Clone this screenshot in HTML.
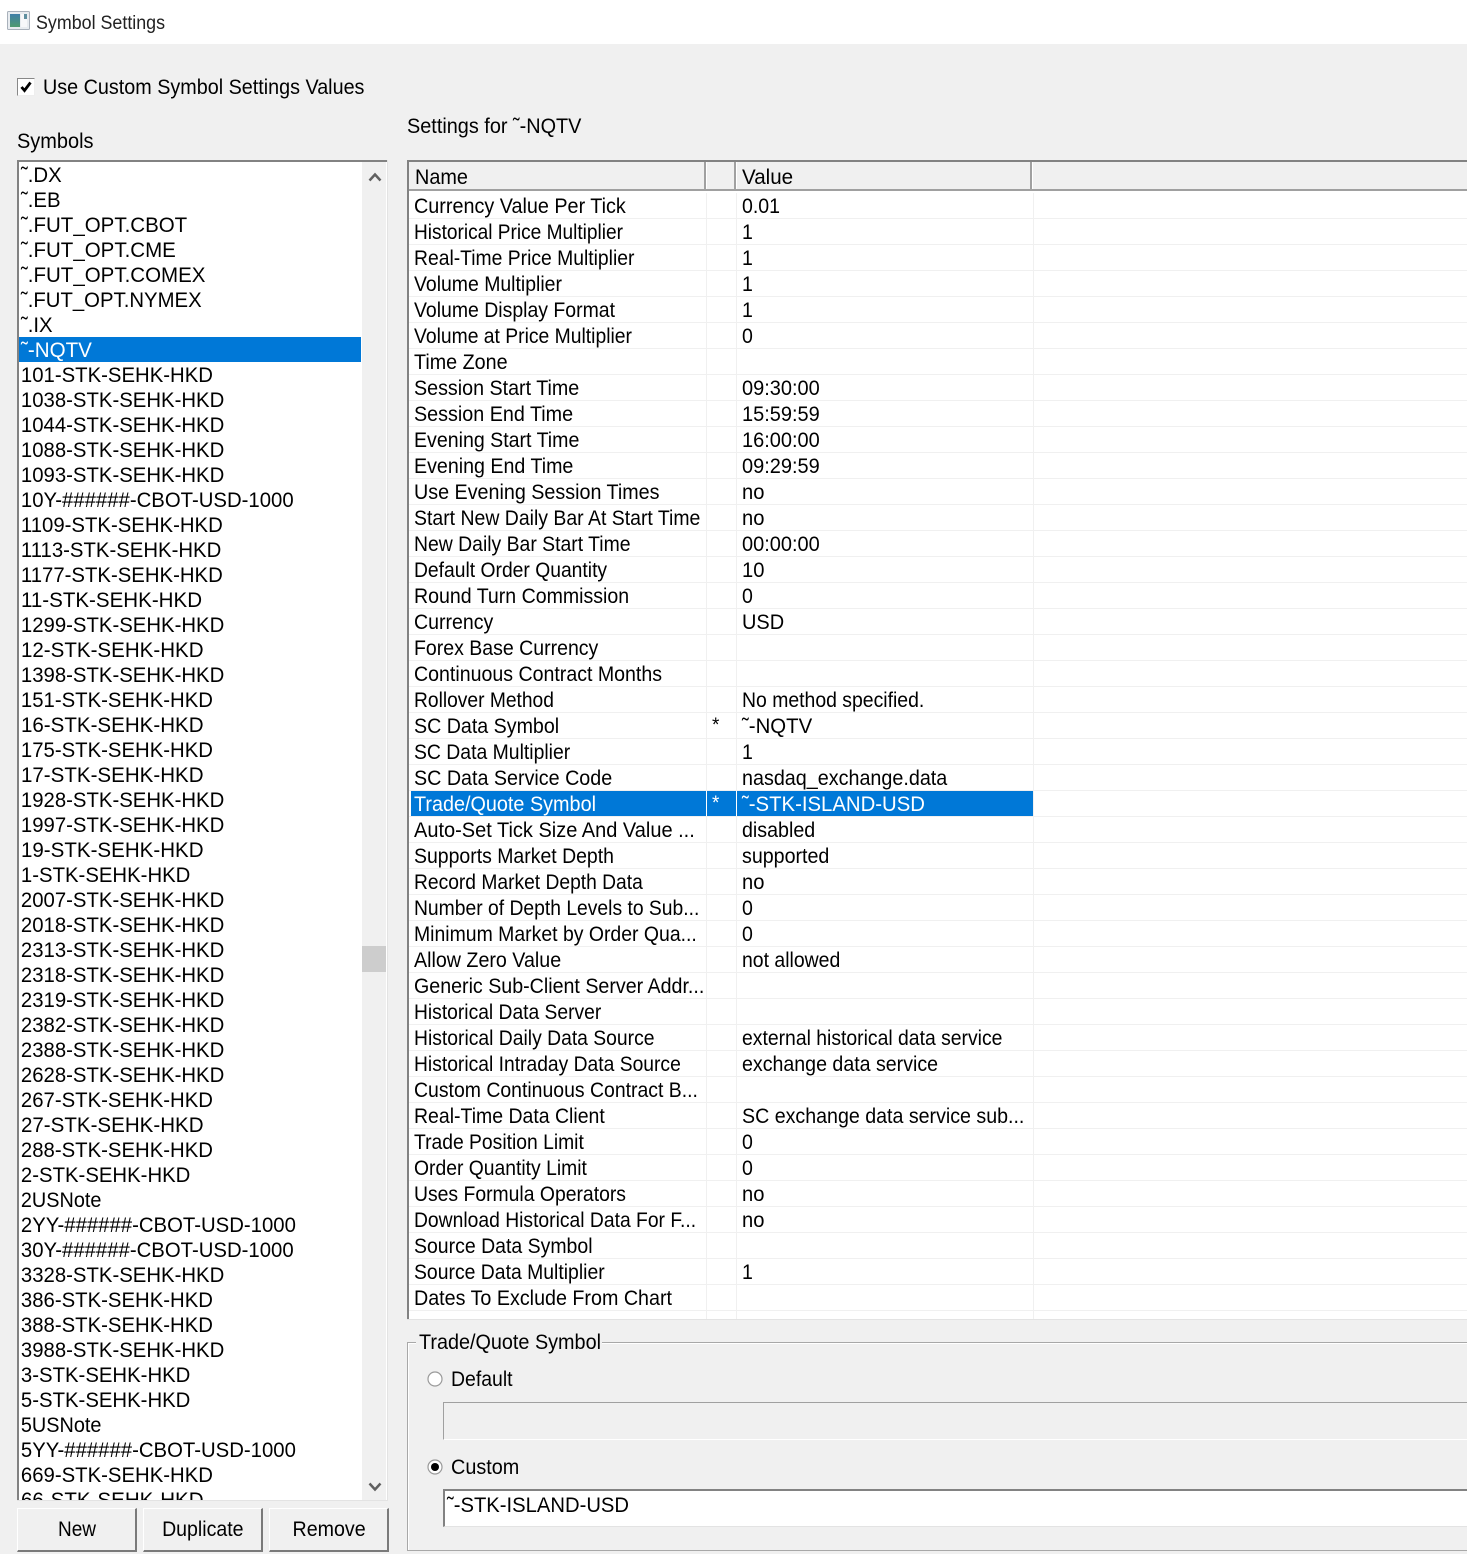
<!DOCTYPE html>
<html><head><meta charset="utf-8"><title>Symbol Settings</title>
<style>
html,body{margin:0;padding:0}
body{width:1467px;height:1554px;position:relative;overflow:hidden;background:#f0f0f0;font-family:"Liberation Sans",Arial,sans-serif;font-size:21px;color:#000}
.a{position:absolute;white-space:nowrap}
.t{transform:scaleX(var(--s,1));transform-origin:0 0}
#title{left:0;top:0;width:1467px;height:44px;background:#fff}
#list{left:17px;top:160px;width:371px;height:1341px;background:#fff;border-top:2px solid #828282;border-left:2px solid #828282;box-sizing:border-box;overflow:hidden}
#list div{position:relative;top:1px;height:25px;line-height:25px;padding-left:2px;width:342px;box-sizing:border-box;white-space:nowrap;transform:scaleX(var(--s,.968));transform-origin:0 0}
#list div.s{top:0;background:#0078d7;color:#fff;transform:none;line-height:27px}
#list div.s span{display:inline-block;transform:scaleX(.98);transform-origin:0 0}
#sb{left:362px;top:162px;width:24px;height:1339px;background:#f0f0f0}
#grid{left:407px;top:160px;width:1060px;height:1160px;background:#fff;border-top:2px solid #828282;border-left:2px solid #828282;box-sizing:border-box;overflow:hidden}
#hd{position:absolute;left:0;top:0;width:1060px;height:29px;background:#f0f0f0;border-bottom:2px solid #a0a0a0;box-sizing:border-box}
.hs{position:absolute;top:0;width:2px;height:27px;background:#a0a0a0;border-right:1px solid #fff}
.ht{position:absolute;top:2px;line-height:27px;transform-origin:0 0}
.col{position:absolute;top:31px;width:1px;height:1130px;background:#f0f0f0}
#rows{position:absolute;left:0;top:31px;width:1060px}
.r{position:relative;height:26px;line-height:25px;border-bottom:1px solid #f0f0f0;box-sizing:border-box;white-space:nowrap}
.r span{position:absolute;top:1px;transform:scaleX(var(--s,.93));transform-origin:0 0}
.r .n{left:4.500px}.r .m{left:303px;top:0;font-size:19px;transform:none}.r .v{left:333px}
.r i{position:absolute;top:0;width:1px;height:25px;background:#fff;z-index:1}
.r.s b{position:absolute;left:2px;top:0;width:622px;height:25px;background:#0078d7}
.r.s span{color:#fff}
.btn{top:1508px;width:120px;height:44px;box-sizing:border-box;background:#f0f0f0;border:1px solid #e3e3e3;border-right:2px solid #7a7a7a;border-bottom:2px solid #7a7a7a;border-left-color:#fff;border-top-color:#fff;text-align:center;line-height:42px;padding-left:1px}
.btn span{display:inline-block;transform:scaleX(var(--s,1))}
</style></head><body>
<div class="a" id="title"></div>
<svg class="a" style="left:7px;top:11px" width="23" height="19" viewBox="0 0 23 19"><rect x=".5" y=".5" width="22" height="18" rx="1" fill="#e8ecf0" stroke="#a9b1bb"/><defs><linearGradient id="g" x1="0" y1="0" x2="0" y2="1"><stop offset="0" stop-color="#3f7fa8"/><stop offset="1" stop-color="#4f9a70"/></linearGradient></defs><rect x="3" y="3" width="10" height="13" fill="url(#g)"/><rect x="14" y="3" width="6" height="13" fill="#f7f8fa"/><rect x="17" y="3" width="3" height="5" fill="#5f8fa0"/></svg>
<div class="a t" style="left:36px;top:12px;line-height:24px;font-size:19px;color:#222;--s:.94">Symbol Settings</div>

<div class="a" style="left:17px;top:78px;width:18px;height:18px;background:#fff;border:1px solid #888;border-right-color:#eee;border-bottom-color:#eee;box-sizing:border-box"></div>
<svg class="a" style="left:20px;top:81px" width="12" height="12" viewBox="0 0 12 12"><path d="M1.500 6 L4.500 9.500 L10.500 1.500" fill="none" stroke="#000" stroke-width="2.800"/></svg>
<div class="a t" style="left:43px;top:75px;line-height:25px;--s:.941">Use Custom Symbol Settings Values</div>
<div class="a t" style="left:17px;top:129px;line-height:25px;--s:.95">Symbols</div>
<div class="a t" style="left:407px;top:114px;line-height:25px;--s:.946">Settings for ˜-NQTV</div>

<div class="a" id="list">
<div style="--s:.97">˜.DX</div><div style="--s:.97">˜.EB</div><div style="--s:.976">˜.FUT_OPT.CBOT</div><div style="--s:.976">˜.FUT_OPT.CME</div><div style="--s:.976">˜.FUT_OPT.COMEX</div><div>˜.FUT_OPT.NYMEX</div><div style="--s:.97">˜.IX</div><div class="s"><span>˜-NQTV</span></div>
<div>101-STK-SEHK-HKD</div><div>1038-STK-SEHK-HKD</div><div>1044-STK-SEHK-HKD</div><div>1088-STK-SEHK-HKD</div><div>1093-STK-SEHK-HKD</div><div>10Y-######-CBOT-USD-1000</div><div>1109-STK-SEHK-HKD</div><div>1113-STK-SEHK-HKD</div><div>1177-STK-SEHK-HKD</div><div style="--s:.978">11-STK-SEHK-HKD</div><div>1299-STK-SEHK-HKD</div><div style="--s:.978">12-STK-SEHK-HKD</div><div>1398-STK-SEHK-HKD</div><div>151-STK-SEHK-HKD</div><div style="--s:.978">16-STK-SEHK-HKD</div><div>175-STK-SEHK-HKD</div><div style="--s:.978">17-STK-SEHK-HKD</div><div>1928-STK-SEHK-HKD</div><div>1997-STK-SEHK-HKD</div><div style="--s:.978">19-STK-SEHK-HKD</div><div>1-STK-SEHK-HKD</div><div>2007-STK-SEHK-HKD</div><div>2018-STK-SEHK-HKD</div><div>2313-STK-SEHK-HKD</div><div>2318-STK-SEHK-HKD</div><div>2319-STK-SEHK-HKD</div><div>2382-STK-SEHK-HKD</div><div>2388-STK-SEHK-HKD</div><div>2628-STK-SEHK-HKD</div><div>267-STK-SEHK-HKD</div><div style="--s:.978">27-STK-SEHK-HKD</div><div>288-STK-SEHK-HKD</div><div>2-STK-SEHK-HKD</div><div style="--s:.945">2USNote</div><div>2YY-######-CBOT-USD-1000</div><div>30Y-######-CBOT-USD-1000</div><div>3328-STK-SEHK-HKD</div><div>386-STK-SEHK-HKD</div><div>388-STK-SEHK-HKD</div><div>3988-STK-SEHK-HKD</div><div>3-STK-SEHK-HKD</div><div>5-STK-SEHK-HKD</div><div style="--s:.945">5USNote</div><div>5YY-######-CBOT-USD-1000</div><div>669-STK-SEHK-HKD</div><div style="--s:.978">66-STK-SEHK-HKD</div>
</div>
<div class="a" id="sb"></div>
<div class="a" style="left:387px;top:160px;width:1px;height:1341px;background:#e3e3e3"></div>
<div class="a" style="left:17px;top:1500px;width:371px;height:1px;background:#e3e3e3"></div>
<div class="a" style="left:362px;top:946px;width:24px;height:26px;background:#cdcdcd"></div>
<svg class="a" style="left:368px;top:171px" width="14" height="12" viewBox="0 0 14 12"><path d="M1.500 9.500 L7 3.500 L12.500 9.500" fill="none" stroke="#606060" stroke-width="2.500"/></svg>
<svg class="a" style="left:368px;top:1481px" width="14" height="12" viewBox="0 0 14 12"><path d="M1.500 2.500 L7 8.500 L12.500 2.500" fill="none" stroke="#606060" stroke-width="2.500"/></svg>

<div class="a btn" style="left:17px"><span style="--s:.905">New</span></div>
<div class="a btn" style="left:143px"><span style="--s:.93">Duplicate</span></div>
<div class="a btn" style="left:269px"><span style="--s:.935">Remove</span></div>

<div class="a" id="grid">
<div id="hd"><div class="hs" style="left:295px"></div><div class="hs" style="left:325px"></div><div class="hs" style="left:621px"></div></div>
<div class="ht" style="left:6px;transform:scaleX(.945)">Name</div><div class="ht" style="left:333px;transform:scaleX(.98)">Value</div>
<div class="col" style="left:297px"></div><div class="col" style="left:327px"></div><div class="col" style="left:624px"></div>
<div id="rows">
<div class="r"><span class="n" style="--s:.942">Currency Value Per Tick</span><span class="v">0.01</span></div>
<div class="r"><span class="n" style="--s:.909">Historical Price Multiplier</span><span class="v">1</span></div>
<div class="r"><span class="n" style="--s:.92">Real-Time Price Multiplier</span><span class="v">1</span></div>
<div class="r"><span class="n" style="--s:.925">Volume Multiplier</span><span class="v">1</span></div>
<div class="r"><span class="n" style="--s:.926">Volume Display Format</span><span class="v">1</span></div>
<div class="r"><span class="n" style="--s:.92">Volume at Price Multiplier</span><span class="v">0</span></div>
<div class="r"><span class="n" style="--s:.94">Time Zone</span></div>
<div class="r"><span class="n" style="--s:.9375">Session Start Time</span><span class="v" style="--s:.951">09:30:00</span></div>
<div class="r"><span class="n" style="--s:.94">Session End Time</span><span class="v" style="--s:.951">15:59:59</span></div>
<div class="r"><span class="n" style="--s:.932">Evening Start Time</span><span class="v" style="--s:.951">16:00:00</span></div>
<div class="r"><span class="n" style="--s:.935">Evening End Time</span><span class="v" style="--s:.951">09:29:59</span></div>
<div class="r"><span class="n" style="--s:.939">Use Evening Session Times</span><span class="v" style="--s:.96">no</span></div>
<div class="r"><span class="n" style="--s:.926">Start New Daily Bar At Start Time</span><span class="v" style="--s:.96">no</span></div>
<div class="r"><span class="n" style="--s:.923">New Daily Bar Start Time</span><span class="v" style="--s:.951">00:00:00</span></div>
<div class="r"><span class="n" style="--s:.919">Default Order Quantity</span><span class="v" style="--s:.96">10</span></div>
<div class="r"><span class="n" style="--s:.931">Round Turn Commission</span><span class="v">0</span></div>
<div class="r"><span class="n" style="--s:.93">Currency</span><span class="v" style="--s:.95">USD</span></div>
<div class="r"><span class="n" style="--s:.929">Forex Base Currency</span></div>
<div class="r"><span class="n" style="--s:.932">Continuous Contract Months</span></div>
<div class="r"><span class="n" style="--s:.915">Rollover Method</span><span class="v" style="--s:.924">No method specified.</span></div>
<div class="r"><span class="n" style="--s:.935">SC Data Symbol</span><span class="m">*</span><span class="v" style="--s:.97">˜-NQTV</span></div>
<div class="r"><span class="n" style="--s:.923">SC Data Multiplier</span><span class="v">1</span></div>
<div class="r"><span class="n" style="--s:.938">SC Data Service Code</span><span class="v" style="--s:.94">nasdaq_exchange.data</span></div>
<div class="r s"><b></b><i style="left:297px"></i><i style="left:327px"></i><span class="n" style="--s:.943">Trade/Quote Symbol</span><span class="m">*</span><span class="v" style="--s:.968">˜-STK-ISLAND-USD</span></div>
<div class="r"><span class="n" style="--s:.952">Auto-Set Tick Size And Value ...</span><span class="v" style="--s:.936">disabled</span></div>
<div class="r"><span class="n" style="--s:.926">Supports Market Depth</span><span class="v" style="--s:.935">supported</span></div>
<div class="r"><span class="n" style="--s:.916">Record Market Depth Data</span><span class="v" style="--s:.96">no</span></div>
<div class="r"><span class="n" style="--s:.919">Number of Depth Levels to Sub...</span><span class="v">0</span></div>
<div class="r"><span class="n" style="--s:.925">Minimum Market by Order Qua...</span><span class="v">0</span></div>
<div class="r"><span class="n" style="--s:.936">Allow Zero Value</span><span class="v" style="--s:.925">not allowed</span></div>
<div class="r"><span class="n" style="--s:.935">Generic Sub-Client Server Addr...</span></div>
<div class="r"><span class="n" style="--s:.917">Historical Data Server</span></div>
<div class="r"><span class="n" style="--s:.92">Historical Daily Data Source</span><span class="v" style="--s:.922">external historical data service</span></div>
<div class="r"><span class="n" style="--s:.918">Historical Intraday Data Source</span><span class="v" style="--s:.933">exchange data service</span></div>
<div class="r"><span class="n" style="--s:.925">Custom Continuous Contract B...</span></div>
<div class="r"><span class="n" style="--s:.927">Real-Time Data Client</span><span class="v" style="--s:.934">SC exchange data service sub...</span></div>
<div class="r"><span class="n" style="--s:.919">Trade Position Limit</span><span class="v">0</span></div>
<div class="r"><span class="n" style="--s:.92">Order Quantity Limit</span><span class="v">0</span></div>
<div class="r"><span class="n" style="--s:.922">Uses Formula Operators</span><span class="v" style="--s:.96">no</span></div>
<div class="r"><span class="n" style="--s:.919">Download Historical Data For F...</span><span class="v" style="--s:.96">no</span></div>
<div class="r"><span class="n" style="--s:.927">Source Data Symbol</span></div>
<div class="r"><span class="n" style="--s:.923">Source Data Multiplier</span><span class="v">1</span></div>
<div class="r"><span class="n" style="--s:.938">Dates To Exclude From Chart</span></div>
<div class="r"></div>
</div>
</div>
<div class="a" style="left:407px;top:1319px;width:1060px;height:1px;background:#e3e3e3"></div>

<div class="a" style="left:407px;top:1342px;width:1060px;height:209px;border:1px solid #a8a8a8;border-right:0;box-shadow:inset 1px 1px 0 #fff;box-sizing:border-box"></div>
<div class="a" style="left:416px;top:1330px;width:186px;height:25px;background:#f0f0f0"></div>
<div class="a t" style="left:419px;top:1330px;line-height:25px;--s:.943">Trade/Quote Symbol</div>
<svg class="a" style="left:426px;top:1370px" width="18" height="18" viewBox="0 0 18 18"><circle cx="9" cy="9" r="7" fill="#fff" stroke="#9a9a9a" stroke-width="1.200"/></svg>
<div class="a t" style="left:451px;top:1367px;line-height:25px;--s:.925">Default</div>
<div class="a" style="left:443px;top:1402px;width:1024px;height:38px;background:#f0f0f0;border-top:1px solid #a0a0a0;border-left:1px solid #a0a0a0;border-bottom:1px solid #fff;box-sizing:border-box"></div>
<svg class="a" style="left:426px;top:1458px" width="18" height="18" viewBox="0 0 18 18"><circle cx="9" cy="9" r="7" fill="#fff" stroke="#9a9a9a" stroke-width="1.200"/><circle cx="9" cy="9" r="4" fill="#000"/></svg>
<div class="a t" style="left:451px;top:1455px;line-height:25px;--s:.944">Custom</div>
<div class="a" style="left:443px;top:1489px;width:1024px;height:38px;background:#fff;border-top:2px solid #828282;border-left:2px solid #828282;border-bottom:1px solid #e3e3e3;box-sizing:border-box"></div>
<div class="a t" style="left:447px;top:1491px;line-height:29px;--s:.963">˜-STK-ISLAND-USD</div>
</body></html>
